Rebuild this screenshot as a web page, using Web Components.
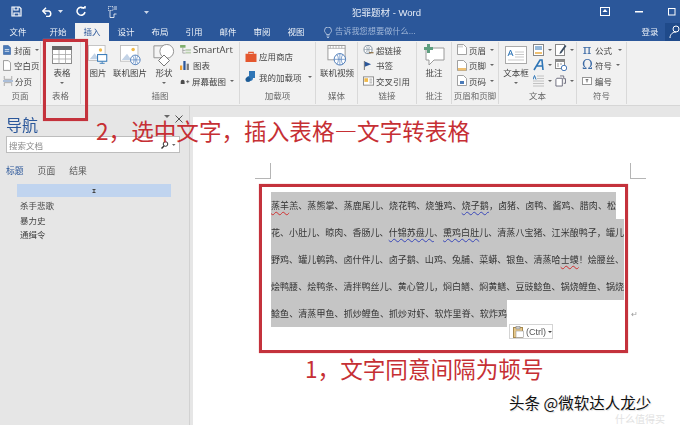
<!DOCTYPE html>
<html lang="zh">
<head>
<meta charset="utf-8">
<title>犯罪题材 - Word</title>
<style>
  html, body { margin: 0; padding: 0; width: 680px; height: 425px; overflow: hidden; background: #fff; }
  body { font-family: "Liberation Sans", "Noto Sans CJK SC", sans-serif; }
</style>
</head>
<body>
<word-app>
  <word-titlebar slot="title" label="犯罪题材 - Word"></word-titlebar>
  <word-tabs slot="tabs"></word-tabs>
  <word-ribbon slot="ribbon"></word-ribbon>
  <nav-pane slot="nav"></nav-pane>
  <doc-page slot="doc"></doc-page>
</word-app>

<script>
// every icon lives here so rb-icon can look it up by name
const ICONS = {
  cover: '<svg viewBox="0 0 9 11"><path d="M.5.5h5.5l2.500 2.500v7.500h-8z" fill="#4a7ab8" stroke="#2b579a" stroke-width=".6"/><path d="M2 5h5M2 7h5" stroke="#fff" stroke-width=".8"/></svg>',
  blank: '<svg viewBox="0 0 9 12"><path d="M.5.500h5.500l2.500 2.500v8.500h-8z" fill="#fff" stroke="#777" stroke-width=".8"/></svg>',
  pagebreak: '<svg viewBox="0 0 12 12"><path d="M1.500 0v4h9v-4M1.500 12v-4h9v4" fill="none" stroke="#8a8a8a" stroke-width=".8"/><path d="M0 6h12" stroke="#4a7ab8" stroke-width="1"/></svg>',
  table: '<svg viewBox="0 0 20 18"><rect x=".5" y=".5" width="19" height="17" fill="#fff" stroke="#8c8c8c"/><rect x="0" y="0" width="20" height="4" fill="#666"/><path d="M0 8.500h20M0 13h20M7 4v14M13.500 4v14" stroke="#a5a5a5" stroke-width=".8"/></svg>',
  picture: '<svg viewBox="0 0 24 24"><rect x=".5" y=".5" width="20" height="18" fill="#fff" stroke="#bbb"/><circle cx="15" cy="6" r="2" fill="#f0b94a"/><path d="M2 17l6-7 5 7z" fill="#c3d3e6"/><rect x="11.500" y="11.500" width="11" height="8" fill="#fff" stroke="#2e75b6" stroke-width="1.200"/><path d="M14 22h6M17 20v2" stroke="#2e75b6"/></svg>',
  onlinepic: '<svg viewBox="0 0 24 24"><rect x=".5" y=".5" width="20" height="18" fill="#fff" stroke="#bbb"/><circle cx="15" cy="5" r="2" fill="#f0b94a"/><path d="M2 17l6-7 5 7z" fill="#c3d3e6"/><circle cx="17.500" cy="17" r="5.500" fill="#fff" stroke="#4a7ab8"/><path d="M12 17h11M17.500 11.500v11M14.500 12.500c2 3 2 6 0 9M20.500 12.500c-2 3-2 6 0 9" fill="none" stroke="#4a7ab8" stroke-width=".7"/></svg>',
  shapes: '<svg viewBox="0 0 24 24"><path d="M1 2h13v13h-13z" fill="#f4f4f4" stroke="#8c8c8c"/><circle cx="15" cy="8" r="7.500" fill="#fff" stroke="#8c8c8c"/><path d="M12 12l6 6-6 6-6-6z" fill="#fff" stroke="#6a6a6a"/></svg>',
  smartart: '<svg viewBox="0 0 12 10"><rect y="0" width="6" height="3" fill="#7fae6c"/><path d="M3 3v6h3M3 6h3" stroke="#777" stroke-width=".6" fill="none"/><rect x="6" y="4.500" width="6" height="2" fill="#bcd0b2"/><rect x="6" y="7.500" width="6" height="2" fill="#bcd0b2"/></svg>',
  chart: '<svg viewBox="0 0 10 10"><rect x="0" y="5" width="2.500" height="5" fill="#f0a030"/><rect x="3.700" y="0" width="2.500" height="10" fill="#2b579a"/><rect x="7.400" y="3" width="2.500" height="7" fill="#7a7a7a"/></svg>',
  screenshot: '<svg viewBox="0 0 11 9"><path d="M0 9V6a2.500 2.500 0 0 1 5 0v3z" fill="#4d4d4d"/><path d="M7 6h4M9 4v4" stroke="#4d4d4d"/></svg>',
  store: '<svg viewBox="0 0 12 12"><path d="M0 3h12v9h-12z" fill="#e4572e"/><path d="M3.500 3V1.500h5V3" fill="none" stroke="#e4572e" stroke-width="1.200"/></svg>',
  addins: '<svg viewBox="0 0 12 11"><path d="M4 0h6v7h-2a3 3 0 0 1-6 0 2 2 0 0 1 2-2z" fill="#2e75b6"/><circle cx="3" cy="8.500" r="2.500" fill="#1e5c96"/></svg>',
  video: '<svg viewBox="0 0 20 22"><rect x=".5" y=".5" width="18" height="15" fill="#fff" stroke="#999"/><path d="M.5 3.500h18M3 .5v3M6 .5v3M9 .5v3M12 .5v3M15 .5v3" stroke="#999" stroke-width=".7"/><circle cx="13" cy="15" r="6" fill="#fff" stroke="#4a7ab8"/><path d="M7 15h12M13 9v12M10 10c2 3 2 7 0 10M16 10c-2 3-2 7 0 10" fill="none" stroke="#4a7ab8" stroke-width=".7"/></svg>',
  link: '<svg viewBox="0 0 11 11"><circle cx="5" cy="5" r="4.500" fill="#fff" stroke="#7a8a9a"/><path d="M.5 5h9M5 .5v9M2.500 1.500c2 2.500 2 4.500 0 7M7.500 1.500c-2 2.500-2 4.500 0 7" fill="none" stroke="#7a8a9a" stroke-width=".6"/><path d="M6 8.500h5" stroke="#8a6a3a" stroke-width="1.300"/></svg>',
  bookmark: '<svg viewBox="0 0 8 10"><path d="M.5 0v10" stroke="#666"/><path d="M1 .5l7 3-7 3z" fill="#2b579a"/></svg>',
  xref: '<svg viewBox="0 0 12 10"><rect x=".5" y=".5" width="11" height="9" fill="#fff" stroke="#888"/><rect x="1.500" y="2" width="4" height="4" fill="#f0b94a"/><path d="M7 3h3M7 5h3M7 7h3" stroke="#777" stroke-width=".7"/></svg>',
  comment: '<svg viewBox="0 0 22 22"><path d="M3 4h18v12h-10l-5 5v-5h-3z" fill="#fff" stroke="#9a9a9a"/><path d="M5.500 0v9M1 4.500h9" stroke="#5f9f80" stroke-width="3"/></svg>',
  header: '<svg viewBox="0 0 10 11"><path d="M.5.500h6l3 3v7h-9z" fill="#fff" stroke="#8a8a8a" stroke-width=".8"/><path d="M1 1.500h5v2h-5z" fill="#d8d8d8"/></svg>',
  footer: '<svg viewBox="0 0 10 11"><path d="M.5.500h6l3 3v7h-9z" fill="#fff" stroke="#8a8a8a" stroke-width=".8"/><path d="M1 8h8v2.500h-8z" fill="#f0c070"/></svg>',
  pagenum: '<svg viewBox="0 0 10 11"><path d="M.5.500h6l3 3v7h-9z" fill="#fff" stroke="#8a8a8a" stroke-width=".8"/><path d="M3 6h4v3h-4z" fill="#4a7ab8"/></svg>',
  textbox: '<svg viewBox="0 0 22 18"><rect x=".5" y=".5" width="21" height="17" fill="#fff" stroke="#aaa"/><path d="M10 6h9M10 8.500h9M10 11h9M3 14h16" stroke="#bbb" stroke-width=".8"/><path d="M3 10l2.500-6 2.500 6M4 8h3" fill="none" stroke="#2e75b6"/></svg>',
  parts: '<svg viewBox="0 0 11 12"><rect x=".5" y=".5" width="10" height="11" fill="#fff" stroke="#888"/><path d="M2 3h7M2 5h7" stroke="#2e75b6"/><rect x="2" y="8" width="7" height="2" fill="#f0c070"/></svg>',
  wordart: '<svg viewBox="0 0 11 12"><path d="M1 11L7 1h2l1 10M3 7h6" fill="none" stroke="#2e75b6" stroke-width="1.600"/></svg>',
  dropcap: '<svg viewBox="0 0 11 12"><path d="M4 1h7M4 3.500h7M0 6h11M0 8.500h11M0 11h11" stroke="#c2c2c2"/><path d="M0 4.500l1.500-4 1.500 4" fill="none" stroke="#2e75b6"/></svg>',
  signature: '<svg viewBox="0 0 12 12"><rect x=".5" y=".5" width="9" height="11" fill="#fff" stroke="#888"/><path d="M5 8l5-7 1.500 1-5 7-2 1z" fill="#3d4f63"/></svg>',
  datetime: '<svg viewBox="0 0 12 12"><rect x=".5" y=".5" width="9" height="9" fill="#fff" stroke="#888"/><rect x="1" y="1" width="8" height="2" fill="#8a8a8a"/><path d="M2 5h2M5 5h2M2 7h2" stroke="#999"/><circle cx="9" cy="9" r="2.700" fill="#fff" stroke="#4a7ab8"/></svg>',
  object: '<svg viewBox="0 0 12 12"><path d="M5.500.5h4v3M2 3h6v8.500h-7v-7z" fill="#fff" stroke="#667"/><path d="M9.500 3.500h2v5h-2" fill="none" stroke="#667"/></svg>',
  numbering: '<svg viewBox="0 0 11 9"><rect x=".5" y=".5" width="10" height="8" fill="#fff" stroke="#8a8a8a"/><path d="M4 3h3M5.500 3v3" stroke="#555"/></svg>'
};

class RbIcon extends HTMLElement {
  connectedCallback() {
    const w = this.getAttribute('w') || 10;
    const h = this.getAttribute('h') || 10;
    this.attachShadow({ mode: 'open' });
    this.shadowRoot.innerHTML = `
      <style>
        :host { display: block; flex: none; width: ${w}px; height: ${h}px; }
        svg { display: block; width: 100%; height: 100%; }
      </style>
      ${ICONS[this.getAttribute('name')] || ''}`;
  }
}
customElements.define('rb-icon', RbIcon);

const CARET = '<span class="caret"></span>';
const CARET_CSS = `.caret { display: inline-block; width: 0; height: 0; border: 2px solid transparent; border-top: 2.500px solid #666; border-bottom: 0; }`;

class RbRow extends HTMLElement {
  connectedCallback() {
    const icon = this.getAttribute('icon');
    const w = this.getAttribute('iw') || 10;
    const h = this.getAttribute('ih') || 10;
    const gap = this.getAttribute('gap') || 3;
    const cg = this.getAttribute('cg') || 4;
    const glyph = this.getAttribute('glyph');
    this.attachShadow({ mode: 'open' });
    this.shadowRoot.innerHTML = `
      <style>
        :host { display: flex; align-items: center; gap: ${gap}px; height: 15.500px; font-size: 8.500px; color: #444; white-space: nowrap; }
        .glyph { font: 13px "DejaVu Serif", serif; color: #3c6aa5; width: ${w}px; text-align: center; line-height: 12px; }
        ${CARET_CSS}
        .caret { margin-left: ${cg - gap}px; }
      </style>
      ${glyph ? `<span class="glyph">${glyph}</span>` : `<rb-icon name="${icon}" w="${w}" h="${h}"></rb-icon>`}
      ${this.getAttribute('label') ? `<span>${this.getAttribute('label')}</span>` : ''}
      ${this.hasAttribute('caret') ? CARET : ''}`;
  }
}
customElements.define('rb-row', RbRow);

class RbBig extends HTMLElement {
  connectedCallback() {
    const w = this.getAttribute('w');
    const iw = this.getAttribute('iw') || 20;
    const ih = this.getAttribute('ih') || 18;
    this.attachShadow({ mode: 'open' });
    this.shadowRoot.innerHTML = `
      <style>
        :host { display: flex; flex: none; flex-direction: column; align-items: center; width: ${w}px; font-size: 8.500px; color: #444; white-space: nowrap; }
        .icon { height: 21px; display: flex; align-items: flex-start; justify-content: center; }
        rb-icon { margin-top: ${this.getAttribute('up') ? -this.getAttribute('up') : 0}px; }
        .label { line-height: 12px; }
        ${CARET_CSS}
        .caret { margin-top: 3px; }
      </style>
      <div class="icon"><rb-icon name="${this.getAttribute('icon')}" w="${iw}" h="${ih}"></rb-icon></div>
      <div class="label">${this.getAttribute('label')}</div>
      ${this.hasAttribute('caret') ? CARET : ''}`;
  }
}
customElements.define('rb-big', RbBig);

class RbGroup extends HTMLElement {
  connectedCallback() {
    this.attachShadow({ mode: 'open' });
    this.shadowRoot.innerHTML = `
      <style>
        :host { display: flex; flex: none; flex-direction: column; box-sizing: border-box; width: ${this.getAttribute('w')}px; border-right: 1px solid #d9d9d9; margin: 1px 0; }
        .body { flex: 1; display: flex; padding: ${this.getAttribute('pad') || '0 0 0 2px'}; min-height: 0; }
        .label { height: 15px; line-height: 15px; text-align: center; font-size: 8.500px; color: #666; white-space: nowrap; }
      </style>
      <div class="body"><slot></slot></div>
      <div class="label">${this.getAttribute('label')}</div>`;
  }
}
customElements.define('rb-group', RbGroup);

class RbCol extends HTMLElement {
  connectedCallback() {
    this.attachShadow({ mode: 'open' });
    this.shadowRoot.innerHTML = `
      <style>
        :host { display: flex; flex: none; flex-direction: column; width: ${this.getAttribute('w') || 'auto'}${this.getAttribute('w') ? 'px' : ''}; }
      </style>
      <slot></slot>`;
  }
}
customElements.define('rb-col', RbCol);

class WordRibbon extends HTMLElement {
  connectedCallback() {
    this.attachShadow({ mode: 'open' });
    this.shadowRoot.innerHTML = `
      <style>
        :host { display: flex; height: 65px; box-sizing: border-box; background: #f1f1f1; border-bottom: 1px solid #d6d6d6; font-family: "Liberation Sans", "Noto Sans CJK SC", sans-serif; filter: blur(.3px); }
      </style>
      <rb-group w="41" label="页面" pad="0 0 0 3px">
        <rb-col>
          <rb-row icon="cover" iw="8" ih="10" label="封面" caret></rb-row>
          <rb-row icon="blank" iw="8" ih="11" label="空白页"></rb-row>
          <rb-row icon="pagebreak" iw="10" ih="10" gap="2" label="分页"></rb-row>
        </rb-col>
      </rb-group>
      <rb-group w="40" label="表格" pad="4px 0 0 3px">
        <rb-big w="36" icon="table" label="表格" caret></rb-big>
      </rb-group>
      <rb-group w="159" label="插图" pad="4px 0 0 3px">
        <rb-big w="28" icon="picture" label="图片" iw="20" ih="20" up="1"></rb-big>
        <rb-big w="36" icon="onlinepic" label="联机图片" iw="21" ih="21" up="1"></rb-big>
        <rb-big w="32" icon="shapes" label="形状" iw="22" ih="22" up="2" caret></rb-big>
        <rb-col style="margin-top:-4px">
          <rb-row icon="smartart" iw="11" ih="9" gap="2" label="&#8203;"></rb-row>
          <rb-row icon="chart" iw="9" ih="9" gap="4" label="图表"></rb-row>
          <rb-row icon="screenshot" iw="10" ih="7" gap="2" label="屏幕截图" caret></rb-row>
        </rb-col>
      </rb-group>
      <rb-group w="76" label="加载项" pad="1px 0 0 5px">
        <rb-col>
          <rb-row icon="store" iw="12" ih="11" gap="2" label="应用商店" style="height:26px"></rb-row>
          <rb-row icon="addins" iw="12" ih="11" gap="2" cg="6" label="我的加载项" caret></rb-row>
        </rb-col>
      </rb-group>
      <rb-group w="42" label="媒体" pad="4px 0 0 2px">
        <rb-big w="38" icon="video" label="联机视频" iw="20" ih="21" up="1"></rb-big>
      </rb-group>
      <rb-group w="59" label="链接" pad="0 0 0 5px">
        <rb-col>
          <rb-row icon="link" iw="11" ih="10" gap="2" label="超链接"></rb-row>
          <rb-row icon="bookmark" iw="9" ih="9" gap="4" label="书签"></rb-row>
          <rb-row icon="xref" iw="11" ih="10" gap="2" label="交叉引用"></rb-row>
        </rb-col>
      </rb-group>
      <rb-group w="35" label="批注" pad="4px 0 0 0">
        <rb-big w="34" icon="comment" label="批注" iw="22" ih="22" up="2"></rb-big>
      </rb-group>
      <rb-group w="47" label="页眉和页脚" pad="0 0 0 5px">
        <rb-col>
          <rb-row icon="header" iw="10" ih="11" gap="2" label="页眉" caret></rb-row>
          <rb-row icon="footer" iw="10" ih="11" gap="2" label="页脚" caret></rb-row>
          <rb-row icon="pagenum" iw="10" ih="11" gap="2" label="页码" caret></rb-row>
        </rb-col>
      </rb-group>
      <rb-group w="78" label="文本" pad="4px 0 0 2px">
        <rb-big w="30" icon="textbox" label="文本框" iw="22" ih="18" caret></rb-big>
        <rb-col w="22" style="margin:-4px 0 0 2px">
          <rb-row icon="parts" iw="11" ih="12" cg="4" caret></rb-row>
          <rb-row icon="wordart" iw="11" ih="12" cg="4" caret></rb-row>
          <rb-row icon="dropcap" iw="11" ih="12" cg="4" caret></rb-row>
        </rb-col>
        <rb-col style="margin-top:-4px">
          <rb-row icon="signature" iw="12" ih="12" cg="3" caret></rb-row>
          <rb-row icon="datetime" iw="12" ih="12"></rb-row>
          <rb-row icon="object" iw="11" ih="12" cg="4" caret></rb-row>
        </rb-col>
      </rb-group>
      <rb-group w="50" label="符号" pad="0 0 0 5px">
        <rb-col>
          <rb-row glyph="π" iw="10" gap="3" cg="6" label="公式" caret></rb-row>
          <rb-row glyph="Ω" iw="10" gap="3" label="符号" caret></rb-row>
          <rb-row icon="numbering" iw="10" ih="8" gap="3" label="编号"></rb-row>
        </rb-col>
      </rb-group>`;
    // SmartArt is latin, so it gets its own wider face
    const sa = this.shadowRoot.querySelector('rb-row[icon="smartart"]');
    sa.shadowRoot.querySelector('span').textContent = 'SmartArt';
    sa.shadowRoot.querySelector('span').style.cssText = 'font:9.500px "Open Sans","Liberation Sans",sans-serif';
  }
}
customElements.define('word-ribbon', WordRibbon);

class WordTitlebar extends HTMLElement {
  connectedCallback() {
    this.attachShadow({ mode: 'open' });
    this.shadowRoot.innerHTML = `
      <style>
        :host { display: flex; align-items: center; height: 23px; background: #2b579a; color: #e6ecf6; font: 9.500px "Liberation Sans", "Noto Sans CJK SC", sans-serif; filter: blur(.3px); }
        .left { display: flex; align-items: center; width: 280px; flex: none; padding-left: 11px; box-sizing: border-box; }
        .title { width: 225px; flex: none; text-align: center; white-space: nowrap; margin-left: -6px; padding-left: 0; }
        .right { flex: 1; display: flex; align-items: center; justify-content: flex-end; gap: 25px; padding-right: 4px; }
        svg { display: block; flex: none; }
      </style>
      <div class="left">
        <svg width="11" height="11" viewBox="0 0 11 11" fill="none" stroke="#fff" stroke-width="1.200"><path d="M1 1h7.500l1.500 1.500v7.500h-9z"/><path d="M3 1v3h4V1M3 10V7h5v3"/></svg>
        <svg style="margin-left:20px" width="11" height="10" viewBox="0 0 11 10" fill="none" stroke="#fff" stroke-width="1.500"><path d="M1 4h6a3 3 0 0 1 0 5.500H4"/><path d="M4 .8L.8 4 4 7.200"/></svg>
        <svg style="margin-left:5px" width="5" height="3" viewBox="0 0 5 3"><path d="M0 0h5L2.500 3z" fill="#dfe6f2"/></svg>
        <svg style="margin-left:13px" width="10" height="11" viewBox="0 0 10 11" fill="none" stroke="#fff" stroke-width="1.500"><path d="M8 2.500A4 4 0 1 0 9 6"/><path d="M5 1.800h4V-1" /></svg>
        <svg style="margin-left:22px" width="9" height="12" viewBox="0 0 9 12" fill="none" stroke="#fff" stroke-width=".8"><rect x=".5" y=".5" width="4.500" height="4" stroke-dasharray="1 .8"/><path d="M2 4.500v7h4V8h2.500"/><path d="M6 1h3M6 3h3" /></svg>
        <svg style="margin-left:27px" width="5" height="4" viewBox="0 0 5 4"><path d="M0 1h5L2.500 4z" fill="#cbd6e8"/></svg>
      </div>
      <div class="title">${this.getAttribute('label')}</div>
      <div class="right">
        <svg width="10" height="9" viewBox="0 0 10 9"><rect x=".5" y=".5" width="9" height="8" fill="none" stroke="#fff"/><path d="M5 2l2.500 3h-5z" fill="#fff"/></svg>
        <svg width="8" height="2" viewBox="0 0 8 2"><rect width="8" height="1.500" fill="#fff"/></svg>
        <svg width="8" height="8" viewBox="0 0 8 8"><rect x=".5" y=".5" width="6.500" height="6.500" fill="none" stroke="#fff"/></svg>
      </div>`;
  }
}
customElements.define('word-titlebar', WordTitlebar);

class WordTabs extends HTMLElement {
  connectedCallback() {
    const tabs = ['开始', '插入', '设计', '布局', '引用', '邮件', '审阅', '视图'];
    this.attachShadow({ mode: 'open' });
    this.shadowRoot.innerHTML = `
      <style>
        :host { display: flex; height: 18px; background: #2b579a; color: #eef2f8; font: 8.500px/18px "Liberation Sans", "Noto Sans CJK SC", sans-serif; filter: blur(.3px); }
        .tab { width: 34px; flex: none; text-align: center; }
        .file { width: 41px; box-sizing: border-box; padding-right: 5px; }
        .active { background: #f1f1f1; color: #2b579a; }
        .tell { display: flex; align-items: center; gap: 3px; margin-left: 11px; color: #9fb6d8; white-space: nowrap; font-size: 8.200px; }
        .login { margin-left: auto; width: 30px; color: #e8eef7; text-align: center; }
        .user { width: 15px; background: #1f4a8a; padding-left: 4px; box-sizing: border-box; overflow: hidden; }
        svg { display: block; }
      </style>
      <div class="tab file">文件</div>
      ${tabs.map(t => `<div class="tab ${t === '插入' ? 'active' : ''}">${t}</div>`).join('')}
      <div class="tell">
        <svg width="8" height="11" viewBox="0 0 8 11" fill="none" stroke="#c7d4e8" stroke-width=".8"><path d="M2.500 7.500C2 5.500.5 5.500.5 3.500a3.500 3.500 0 0 1 7 0c0 2-1.500 2-2 4z"/><path d="M2.500 9h3M3 10.500h2"/></svg>
        <span>告诉我您想要做什么...</span>
      </div>
      <div class="login">登录</div>
      <div class="user"><svg width="11" height="14" viewBox="0 0 11 14" style="margin-top:2px" fill="none" stroke="#fff"><circle cx="7" cy="4" r="3"/><path d="M1 13c0-4 3-6 6-6"/></svg></div>`;
  }
}
customElements.define('word-tabs', WordTabs);

class NavPane extends HTMLElement {
  connectedCallback() {
    this.attachShadow({ mode: 'open' });
    this.shadowRoot.innerHTML = `
      <style>
        :host { display: block; flex: none; width: 190px; box-sizing: border-box; position: relative; padding: 10px 9px 0 6px; background: #e6e6e6; border-right: 1px solid #d2d2d2; color: #444; font: 8.500px "Liberation Sans", "Noto Sans CJK SC", sans-serif; filter: blur(.3px); }
        h2 { margin: 0; font-size: 16px; font-weight: 400; line-height: 20px; color: #2b579a; }
        .search { display: flex; align-items: center; justify-content: space-between; height: 17px; box-sizing: border-box; padding: 0 3px 0 2px; background: #fff; border: 1px solid #bdbdbd; color: #8a8a8a; }
        .tabs { display: flex; gap: 14px; margin-top: 12px; line-height: 13px; color: #555; font-size: 8.800px; }
        .tabs b { font-weight: 400; color: #2b579a; }
        .heading { height: 13px; margin: 6px 0 0 11px; width: 154px; background: #c0d4ef; border: 0; display: flex; align-items: center; justify-content: center; }
        .items { margin: 0 0 0 14px; line-height: 14.500px; padding-top: 2px; }
        .pin { position: absolute; right: 19px; top: 9px; width: 0; height: 0; border: 3px solid transparent; border-top: 3.500px solid #666; border-bottom: 0; }
        .close { position: absolute; right: 6px; top: 9px; }
        svg { display: block; }
      </style>
      <h2>导航</h2>
      <span class="pin"></span>
      <svg class="close" width="8" height="8" viewBox="0 0 8 8" stroke="#555"><path d="M.5.5l7 7M7.500.5l-7 7"/></svg>
      <div class="search">
        <span>搜索文档</span>
        <svg width="15" height="8" viewBox="0 0 15 8" fill="none" stroke="#333"><circle cx="4.500" cy="3" r="2.300"/><path d="M3 5L.5 7.500" stroke-width="1.400"/><path d="M11 3h3.500l-1.700 2z" fill="#666" stroke="none"/></svg>
      </div>
      <div class="tabs"><b>标题</b><span>页面</span><span>结果</span></div>
      <div class="heading"><svg width="4" height="4" viewBox="0 0 4 4"><path d="M0 0h4L2 2zM0 4h4L2 2z" fill="#444"/></svg></div>
      <div class="items"><div>杀手悲歌</div><div>暴力史</div><div>通缉令</div></div>`;
  }
}
customElements.define('nav-pane', NavPane);

class DocLine extends HTMLElement {
  connectedCallback() {
    this.attachShadow({ mode: 'open' });
    this.shadowRoot.innerHTML = `
      <style>
        :host { display: block; width: ${this.getAttribute('w')}px; height: 27px; line-height: 29px; background: #c5c5c5; text-align: justify; text-align-last: justify; white-space: nowrap; overflow: hidden; }
      </style>
      <slot></slot>`;
  }
}
customElements.define('doc-line', DocLine);

class DocPage extends HTMLElement {
  connectedCallback() {
    this.attachShadow({ mode: 'open' });
    this.shadowRoot.innerHTML = `
      <style>
        :host { display: block; flex: 1; position: relative; margin: 11px 0 0 3px; padding: 75px 0 0 78px; box-sizing: border-box; background: #fff; color: #333; font: 9px "Liberation Sans", "Noto Sans CJK SC", sans-serif; filter: blur(.25px); }
        .err { text-decoration: underline wavy #d03030 .6px; text-underline-offset: 2px; }
        .gram { text-decoration: underline wavy #3a48b8 .6px; text-underline-offset: 2px; }
        .mark { position: absolute; width: 15px; height: 15px; top: 46px; border-color: #b5b5b5; border-style: solid; border-width: 0; }
        .ml { left: 62px; border-right-width: 1px; border-bottom-width: 1px; }
        .mr { left: 437px; border-left-width: 1px; border-bottom-width: 1px; }
        .pilcrow { position: absolute; left: 438px; top: 193px; font-size: 8px; color: #999; }
        .paste { position: absolute; left: 316px; top: 207px; display: flex; align-items: center; gap: 2px; width: 44px; height: 15px; box-sizing: border-box; padding-left: 3px; background: #fff; border: 1px solid #d4d4d4; color: #555; font-size: 9px; }
        .caret { width: 0; height: 0; border: 2px solid transparent; border-top: 2.500px solid #444; border-bottom: 0; }
        svg { display: block; flex: none; }
      </style>
      <span class="mark ml"></span><span class="mark mr"></span>
      <doc-line w="345"><span class="err">蒸羊</span>羔、蒸熊掌、蒸鹿尾儿、烧花鸭、烧雏鸡、<span class="gram">烧子鹅</span>，卤猪、卤鸭、酱鸡、腊肉、松</doc-line>
      <doc-line w="353">花、小肚儿、晾肉、香肠儿、<span class="gram">什锦苏盘儿</span>、<span class="gram">熏鸡白肚</span>儿、清蒸八宝猪、江米酿鸭子，罐儿</doc-line>
      <doc-line w="353">野鸡、罐儿鹌鹑、卤什件儿、卤子鹅、山鸡、兔脯、菜蟒、银鱼、清蒸哈<span class="err">士蟆</span>！烩腰丝、</doc-line>
      <doc-line w="353">烩鸭腰、烩鸭条、清拌鸭丝儿、黄心管儿，焖白鳝、焖黄鳝、豆豉鲶鱼、锅烧鲤鱼、锅烧</doc-line>
      <doc-line w="236">鲶鱼、清蒸甲鱼、抓炒鲤鱼、抓炒对虾、软炸里脊、软炸鸡</doc-line>
      <span class="pilcrow">↵</span>
      <div class="paste">
        <svg width="11" height="12" viewBox="0 0 11 12"><rect x=".5" y="1.500" width="9" height="10" fill="#e8c98a" stroke="#a5894f"/><rect x="3" y=".5" width="4" height="2.500" fill="#ccc" stroke="#888" stroke-width=".6"/><rect x="3" y="5" width="7.500" height="6.500" fill="#fff" stroke="#999" stroke-width=".6"/></svg>
        <span>(Ctrl)</span><span class="caret"></span>
      </div>`;
  }
}
customElements.define('doc-page', DocPage);

class WordApp extends HTMLElement {
  connectedCallback() {
    this.attachShadow({ mode: 'open' });
    this.shadowRoot.innerHTML = `
      <style>
        :host { display: flex; flex-direction: column; position: relative; width: 680px; height: 425px; overflow: hidden; background: #e6e6e6; }
        .body { flex: 1; display: flex; min-height: 0; }
        .box { position: absolute; box-sizing: border-box; border: 3px solid #c4323c; box-shadow: 0 0 1px #d88; }
        .note { position: absolute; color: #c62f34; font: 22.600px/30px "Noto Sans CJK SC", sans-serif; white-space: nowrap; }
        .sign { position: absolute; left: 509px; top: 394px; color: #111; font: 15.500px/16px "Noto Sans CJK SC", sans-serif; white-space: nowrap; text-shadow: 0 0 2px #fff, 1px 1px 1px #ddd; }
        .faint { position: absolute; left: 615px; top: 413px; color: #e2e2e2; font: 10px/11px "Noto Sans CJK SC", sans-serif; white-space: nowrap; }
      </style>
      <slot name="title"></slot>
      <slot name="tabs"></slot>
      <slot name="ribbon"></slot>
      <div class="body"><slot name="nav"></slot><slot name="doc"></slot></div>
      <div class="box" style="left:43px;top:39px;width:45px;height:82px"></div>
      <div class="box" style="left:259px;top:184px;width:369px;height:169px"></div>
      <div class="note" style="left:96px;top:116px">2，选中文字，插入表格—文字转表格</div>
      <div class="note" style="left:305px;top:354px">1，文字同意间隔为顿号</div>
      <div class="faint">什么值得买</div>
      <div class="sign">头条 @微软达人龙少</div>`;
  }
}
customElements.define('word-app', WordApp);
</script>
</body>
</html>
